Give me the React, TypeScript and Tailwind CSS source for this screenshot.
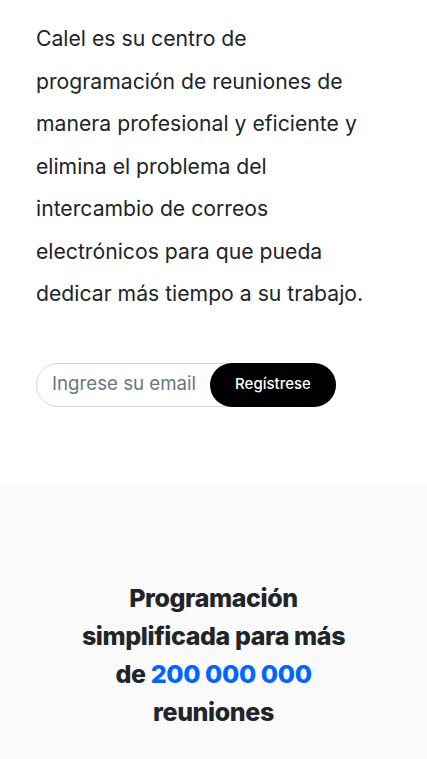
export default function App() {
  return (
    <div className="w-[427px] bg-white" style={{ fontFamily: "Inter, 'Noto Sans', sans-serif" }}>
      <section className="px-9 pt-[17px] pb-[77px]">
        <p className="w-[340px] text-[21.2px] leading-[42.5px] text-[#212529]">
          Calel es su centro de programación de reuniones de manera profesional y eficiente y elimina el problema del intercambio de correos electrónicos para que pueda dedicar más tiempo a su trabajo.
        </p>
        <form className="mt-[48px] flex w-[300px] h-[44px] rounded-full border border-[#d6d8dc] bg-white" onSubmit={(e) => e.preventDefault()}>
          <input
            type="email"
            placeholder="Ingrese su email"
            className="min-w-0 flex-1 bg-transparent pl-[15px] text-[18.7px] text-[#212529] placeholder:text-[#6a7686] outline-none"
          />
          <button type="submit" className="-my-px -mr-px h-[44px] w-[126px] shrink-0 rounded-full bg-black text-[15px] font-medium text-white">
            Regístrese
          </button>
        </form>
      </section>
      <section className="bg-[#fafafa] pt-[95px] pb-[40px] min-h-[276px]">
        <h2 className="mx-auto w-[280px] text-center text-[25px] font-extrabold leading-[38px] text-[#212529] tracking-[-0.4px]">
          Programación simplificada para más de <span className="text-[#0066ff]">200 000 000</span> reuniones
        </h2>
      </section>
    </div>
  );
}
